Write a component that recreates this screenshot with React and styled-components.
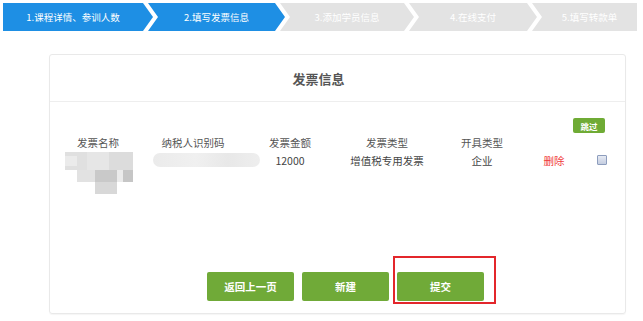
import React from "react";
import styled, { createGlobalStyle } from "styled-components";

const Global = createGlobalStyle`
  html, body { margin: 0; padding: 0; background: #fff; }
  body { font-family: "Noto Sans CJK SC", "Noto Sans", sans-serif; width: 643px; height: 321px; overflow: hidden; }
`;

const Page = styled.div`
  width: 643px;
  height: 321px;
  box-sizing: border-box;
  padding-top: 3px;
`;

const Steps = styled.div`
  display: flex;
  padding-left: 3px;
  height: 28px;
`;

const Step = styled.div`
  flex: none;
  width: ${(p) => p.$w}px;
  margin-left: ${(p) => (p.$first ? 0 : -5)}px;
  height: 28px;
  background: ${(p) => (p.$active ? "#1e8fe4" : "#e3e3e3")};
  color: #fff;
  font-size: 9.5px;
  display: flex;
  align-items: center;
  justify-content: center;
  padding-left: ${(p) => (p.$first ? 0 : 10)}px;
  padding-right: ${(p) => (p.$last ? 0 : 10)}px;
  box-sizing: border-box;
  clip-path: ${(p) =>
    p.$first
      ? "polygon(0 0, calc(100% - 10px) 0, 100% 50%, calc(100% - 10px) 100%, 0 100%)"
      : p.$last
      ? "polygon(0 0, 100% 0, 100% 100%, 0 100%, 10px 50%)"
      : "polygon(0 0, calc(100% - 10px) 0, 100% 50%, calc(100% - 10px) 100%, 0 100%, 10px 50%)"};
  white-space: nowrap;
`;

const Panel = styled.div`
  margin: 23px 0 0 49px;
  width: 577px;
  height: 260px;
  box-sizing: border-box;
  border: 1px solid #e9e9e9;
  border-radius: 3px;
  box-shadow: 0 1px 1px rgba(0,0,0,0.04);
`;

const Header = styled.div`
  height: 46px;
  border-bottom: 1px solid #eeeeee;
  display: flex;
  align-items: center;
  justify-content: center;
  padding-right: 38px;
  font-size: 13px;
  font-weight: bold;
  color: #555;
`;

const Body = styled.div`
  padding-top: 16px;
`;

const SkipRow = styled.div`
  display: flex;
  justify-content: flex-end;
  padding-right: 20px;
`;

const SmallGreen = styled.div`
  width: 32px;
  height: 15px;
  border-radius: 2px;
  background: #6fab35;
  color: #fff;
  font-size: 8.5px;
  font-weight: bold;
  display: flex;
  align-items: center;
  justify-content: center;
`;

const Table = styled.div`
  display: grid;
  grid-template-columns: 96px 94px 100px 94px 96px 48px 48px;
  grid-template-rows: 18px 18px;
  height: 139px;
  align-content: start;
`;

const Cell = styled.div`
  display: flex;
  justify-content: ${(p) => (p.$top ? "flex-start" : "center")};
  align-items: ${(p) => (p.$top ? "flex-start" : "center")};
  font-size: 10.5px;
  color: ${(p) => (p.$danger ? "#f03a3a" : p.$head ? "#555" : "#444")};
  white-space: nowrap;
  padding-top: ${(p) => (p.$top ? 1 : 0)}px;
  height: 18px;
  min-width: 0;
  overflow: visible;
`;

const Blur = styled.div`
  flex: none;
  width: 107px;
  height: 14px;
  border-radius: 7px;
  background: linear-gradient(90deg, #ebebeb, #f0f0f0 40%, #e8e8e8 70%, #eeeeee);
  margin-left: 7px;
  margin-top: 1px;
`;

const MosaicWrap = styled.div`
  flex: none;
  margin-left: 15px;
  width: 68px;
  height: 42px;
  filter: blur(0.6px);
`;

const Check = styled.div`
  width: 8px;
  height: 8px;
  border: 1px solid #8d9dbd;
  border-radius: 1px;
  background: linear-gradient(#e6eaf3, #c4cde0);
`;

const Actions = styled.div`
  display: flex;
  gap: 8px;
  padding-left: 157px;
`;

const Btn = styled.div`
  width: 87px;
  height: 29px;
  border-radius: 2px;
  background: #70aa38;
  color: #fff;
  font-size: 10.5px;
  font-weight: bold;
  display: flex;
  align-items: center;
  justify-content: center;
  position: relative;
  &::after {
    content: "";
    display: ${(p) => (p.$marked ? "block" : "none")};
    position: absolute;
    left: -4px;
    top: -16px;
    right: -12px;
    bottom: -3px;
    border: 2px solid #e3262b;
  }
`;

const Mosaic = () => (
  <MosaicWrap>
    <svg width="68" height="42" viewBox="0 0 68 42">
      <rect x="0" y="0" width="22" height="18" fill="#e0e0e0" />
      <rect x="22" y="0" width="22" height="18" fill="#e6e6e6" />
      <rect x="44" y="0" width="24" height="18" fill="#dcdcdc" />
      <rect x="0" y="4" width="12" height="10" fill="#ebebeb" />
      <rect x="12" y="18" width="18" height="12" fill="#e2e2e2" />
      <rect x="30" y="18" width="22" height="12" fill="#c9c9c9" />
      <rect x="52" y="18" width="6" height="12" fill="#ebebeb" />
      <rect x="58" y="18" width="10" height="12" fill="#c6c6c6" />
      <rect x="30" y="30" width="22" height="12" fill="#d8d8d8" />
    </svg>
  </MosaicWrap>
);

const steps = [
  { t: "1.课程详情、参训人数", w: 150, a: true },
  { t: "2.填写发票信息", w: 137, a: true },
  { t: "3.添加学员信息", w: 134 },
  { t: "4.在线支付", w: 128 },
  { t: "5.填写转款单", w: 105 },
];

export default function App() {
  return (
    <Page>
      <Global />
      <Steps>
        {steps.map((s, i) => (
          <Step key={i} $w={s.w} $active={s.a} $first={i === 0} $last={i === steps.length - 1}>
            {s.t}
          </Step>
        ))}
      </Steps>
      <Panel>
        <Header>发票信息</Header>
        <Body>
          <SkipRow>
            <SmallGreen>跳过</SmallGreen>
          </SkipRow>
          <Table>
            <Cell $head>发票名称</Cell>
            <Cell $head>纳税人识别码</Cell>
            <Cell $head>发票金额</Cell>
            <Cell $head>发票类型</Cell>
            <Cell $head>开具类型</Cell>
            <Cell />
            <Cell />
            <Cell $top><Mosaic /></Cell>
            <Cell $top><Blur /></Cell>
            <Cell>12000</Cell>
            <Cell>增值税专用发票</Cell>
            <Cell>企业</Cell>
            <Cell $danger>删除</Cell>
            <Cell><Check /></Cell>
          </Table>
          <Actions>
            <Btn>返回上一页</Btn>
            <Btn>新建</Btn>
            <Btn $marked>提交</Btn>
          </Actions>
        </Body>
      </Panel>
    </Page>
  );
}
